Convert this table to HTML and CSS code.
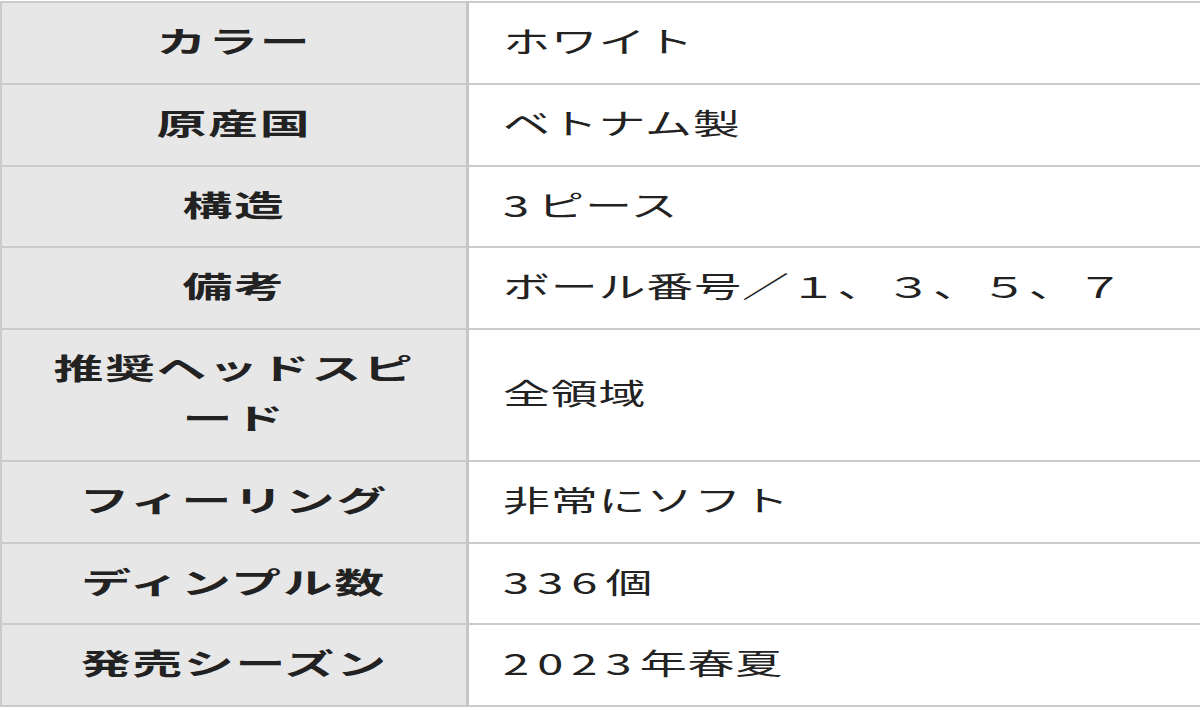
FILE: index.html
```html
<!DOCTYPE html>
<html lang="ja">
<head>
<meta charset="utf-8">
<title>スペック</title>
<link rel="stylesheet" href="styles.css">
</head>
<body>
<table class="spec">
  <tbody>
    <tr><th><span class="t">カラー</span></th><td><span class="t">ホワイト</span></td></tr>
    <tr><th><span class="t">原産国</span></th><td><span class="t">ベトナム製</span></td></tr>
    <tr><th><span class="t">構造</span></th><td><span class="t"><span class="num">3</span>ピース</span></td></tr>
    <tr><th><span class="t">備考</span></th><td><span class="t">ボール番号／１、３、５、７</span></td></tr>
    <tr><th><span class="t">推奨ヘッドスピ<br>ード</span></th><td><span class="t">全領域</span></td></tr>
    <tr><th><span class="t">フィーリング</span></th><td><span class="t">非常にソフト</span></td></tr>
    <tr><th><span class="t">ディンプル数</span></th><td><span class="t"><span class="num">336</span>個</span></td></tr>
    <tr><th><span class="t">発売シーズン</span></th><td><span class="t"><span class="num">2023</span>年春夏</span></td></tr>
  </tbody>
</table>
</body>
</html>
```

FILE: styles.css
```css
html, body {
  margin: 0;
  padding: 0;
  background: #ffffff;
  overflow: hidden;
}

.spec {
  margin-top: 1px;
  width: 1212px;
  border-collapse: collapse;
  table-layout: fixed;
  font-family: "Noto Sans CJK JP", "Noto Sans", sans-serif;
  font-size: 29px;
  color: #222222;
}

.spec th,
.spec td {
  border: 2px solid #cbcbcb;
  padding: 13px 34px 17px;
  line-height: 49.8px;
  vertical-align: middle;
}

.spec th {
  width: 464px;
  padding: 13px 0 17px;
  background: #e7e7e7;
  font-weight: bold;
  text-align: center;
  border-right: 3px solid #c6c6c6;
  border-left: 2px solid #cbcbcb;
}

.spec td {
  text-align: left;
  font-weight: normal;
  background: #ffffff;
}

.t {
  display: inline-block;
  white-space: nowrap;
}

.spec th .t {
  letter-spacing: 1px;
  transform: scaleX(1.72);
  transform-origin: center;
}

.spec td .t {
  letter-spacing: 0.5px;
  transform: scaleX(1.62);
  transform-origin: left center;
}

.num {
  letter-spacing: 5px;
}
```
